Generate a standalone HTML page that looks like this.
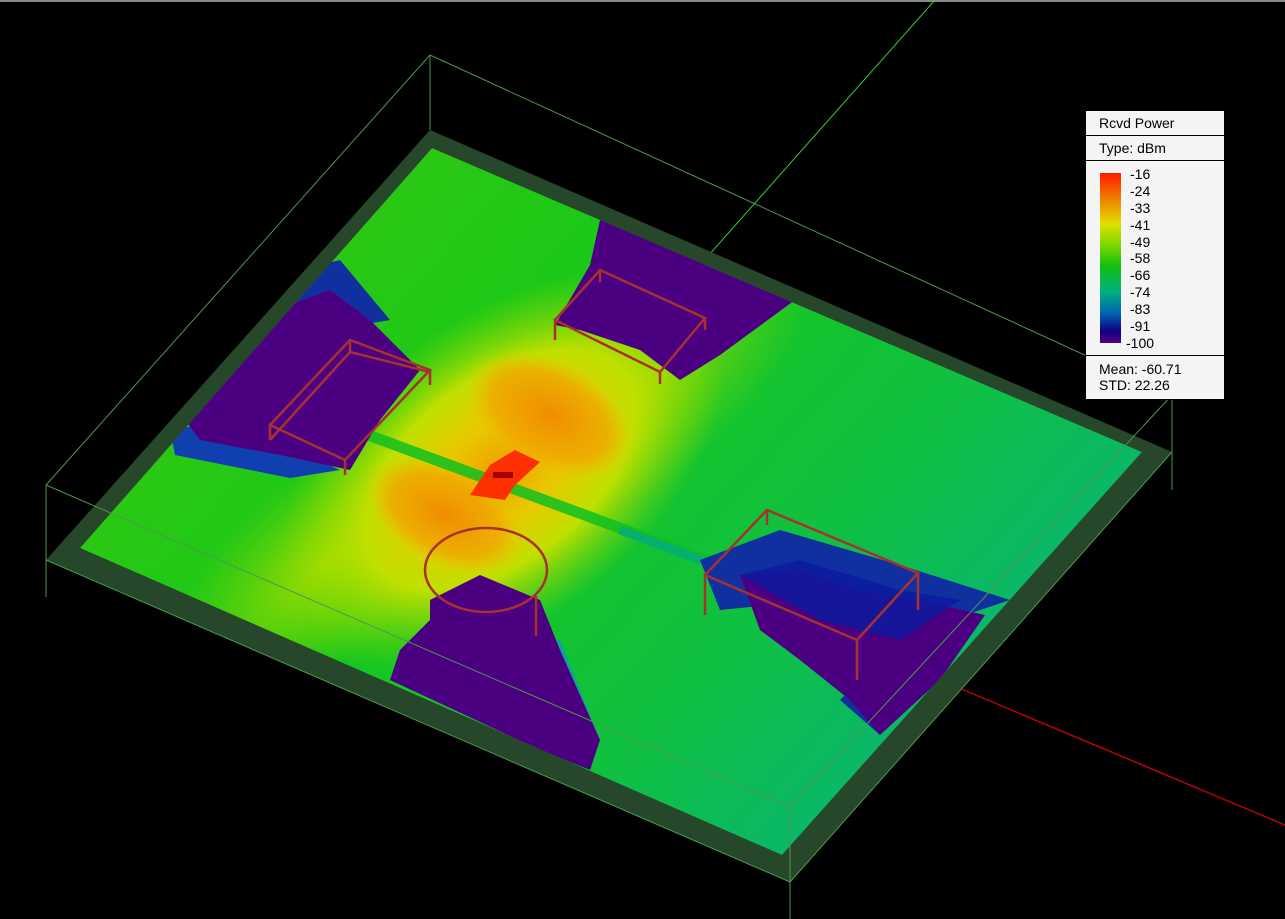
<!DOCTYPE html>
<html><head><meta charset="utf-8"><style>
html,body{margin:0;padding:0;background:#000;width:1285px;height:919px;overflow:hidden}
.leg{position:absolute;left:1085px;top:110px;width:138px;height:288px;background:#f4f4f4;border:1px solid #000;font-family:"Liberation Sans",sans-serif;font-size:14px;color:#000}
.leg .hr{position:absolute;left:0;right:0;height:1px;background:#000}
.leg .t{position:absolute;left:13px}
.bar{position:absolute;left:14px;top:62px;width:21px;height:170px;background:linear-gradient(#ff1a00,#f07800 14%,#e0e000 30%,#80d800 42%,#10c010 55%,#00b080 70%,#0060b0 83%,#100080 93%,#500080)}
.lb{position:absolute;left:44px;font-size:14px;line-height:14px}
</style></head><body>
<svg width="1285" height="919" style="position:absolute;left:0;top:0">
<defs>
<clipPath id="fl"><polygon points="80,548 432,148 1142,452 782,855"/></clipPath>
<linearGradient id="base" x1="0" y1="0" x2="1" y2="0.6"><stop offset="0" stop-color="#40c810"/><stop offset="0.45" stop-color="#18c818"/><stop offset="0.75" stop-color="#10c040"/><stop offset="1" stop-color="#08b478"/></linearGradient>
<radialGradient id="hot" cx="0.5" cy="0.5" r="0.5"><stop offset="0" stop-color="#f0a000"/><stop offset="0.3" stop-color="#e8c800"/><stop offset="0.6" stop-color="#c0e000"/><stop offset="1" stop-color="#80d800" stop-opacity="0"/></radialGradient>
<radialGradient id="or" cx="0.5" cy="0.5" r="0.5"><stop offset="0" stop-color="#f08c00"/><stop offset="0.7" stop-color="#f0a800" stop-opacity="0.8"/><stop offset="1" stop-color="#f0c000" stop-opacity="0"/></radialGradient>
<radialGradient id="yg" cx="0.5" cy="0.5" r="0.5"><stop offset="0" stop-color="#a8dc00"/><stop offset="1" stop-color="#80d800" stop-opacity="0"/></radialGradient>
</defs>
<rect x="0" y="0" width="1285" height="2" fill="#888"/>
<line x1="935" y1="0" x2="700" y2="265" stroke="#30d030" stroke-width="1"/>
<line x1="940" y1="680" x2="1285" y2="825" stroke="#e00000" stroke-width="1.2"/>
<!-- plate -->
<polygon points="46,560 430,130 1172,452 790,882" fill="#26472a"/>
<g clip-path="url(#fl)">
<polygon points="80,548 432,148 1142,452 782,855" fill="url(#base)"/>
<ellipse cx="330" cy="560" rx="200" ry="90" fill="url(#yg)" transform="rotate(-40 330 560)"/>
<ellipse cx="650" cy="380" rx="200" ry="90" fill="url(#yg)" transform="rotate(-40 650 380)" opacity="0.8"/>
<ellipse cx="500" cy="470" rx="260" ry="150" fill="url(#hot)" transform="rotate(-38 500 470)"/>
<ellipse cx="550" cy="415" rx="90" ry="55" fill="url(#or)" transform="rotate(28 550 415)"/>
<ellipse cx="445" cy="515" rx="85" ry="50" fill="url(#or)" transform="rotate(28 445 515)"/>
<line x1="360" y1="432" x2="720" y2="565" stroke="#10c020" stroke-width="11" opacity="0.85"/>
<line x1="620" y1="530" x2="720" y2="567" stroke="#00a890" stroke-width="9" opacity="0.7"/>
<polygon points="490,465 515,450 540,462 515,485 505,500 470,495" fill="#ff3000"/>
<rect x="493" y="472" width="20" height="6" fill="#a00000"/>
<!-- blue fringes -->
<polygon points="300,270 340,260 390,320 330,330 290,310" fill="#1030a0"/>
<polygon points="170,430 230,420 340,470 290,478 175,455" fill="#1040b0"/>
<polygon points="700,560 780,530 900,565 1010,600 950,620 820,600 720,610" fill="#1030a0"/>
<polygon points="510,650 560,640 600,740 560,745 500,720" fill="#10a0a0"/>
<polygon points="860,680 900,690 880,735 840,700" fill="#1030a0"/>
<!-- purple -->
<g fill="#4a0080">
<polygon points="600,220 750,270 795,300 720,355 680,380 640,350 580,330 555,325 590,265"/>
<polygon points="290,305 330,290 370,320 420,370 380,420 350,470 280,455 200,440 185,420"/>
<polygon points="430,600 480,575 540,600 560,650 600,740 590,770 540,750 390,680 400,650 430,620"/>
<polygon points="740,575 800,570 860,590 940,605 985,615 940,680 880,735 850,700 800,660 760,630"/>
</g>
<polygon points="740,575 800,560 900,590 960,600 900,640 820,620" fill="#0a1aa0" opacity="0.8"/>
</g>
<!-- red wireframes -->
<g stroke="#a83030" stroke-width="2.5" fill="none">
<polyline points="270,440 350,352 430,372 430,385"/>
<polyline points="350,340 350,352"/>
<polyline points="270,425 350,340 430,370 345,460 270,425 270,440"/>
<polyline points="345,460 345,475"/>
<polyline points="555,320 600,270 705,318 660,372 555,320 555,340"/>
<polyline points="705,318 705,330"/><polyline points="660,372 660,384"/><polyline points="600,270 600,282"/>
<polyline points="705,575 767,510 918,573 857,640 705,575 705,615"/>
<polyline points="767,510 767,525"/><polyline points="918,573 918,610"/><polyline points="857,640 857,680"/>
<ellipse cx="486" cy="570" rx="61" ry="42"/>
<line x1="536" y1="596" x2="536" y2="636"/>
</g>
<!-- green wireframe -->
<g stroke="#4a9a4a" stroke-width="1" fill="none">
<polyline points="46,485 430,55 1172,395"/>
<line x1="46" y1="485" x2="790" y2="807"/>
<line x1="790" y1="807" x2="1172" y2="395"/>
<line x1="46" y1="485" x2="46" y2="597"/>
<line x1="430" y1="55" x2="430" y2="130"/>
<line x1="1172" y1="395" x2="1172" y2="490"/>
<line x1="790" y1="807" x2="790" y2="919"/>
<line x1="46" y1="560" x2="790" y2="882"/>
<line x1="790" y1="882" x2="1172" y2="452"/>
</g>
</svg>
<div class="leg">
<div class="t" style="top:4px">Rcvd Power</div>
<div class="hr" style="top:24px"></div>
<div class="t" style="top:29px">Type: dBm</div>
<div class="hr" style="top:49px"></div>
<div class="bar"></div>
<div class="lb" style="top:56px">-16</div>
<div class="lb" style="top:73px">-24</div>
<div class="lb" style="top:90px">-33</div>
<div class="lb" style="top:107px">-41</div>
<div class="lb" style="top:124px">-49</div>
<div class="lb" style="top:140px">-58</div>
<div class="lb" style="top:157px">-66</div>
<div class="lb" style="top:174px">-74</div>
<div class="lb" style="top:191px">-83</div>
<div class="lb" style="top:208px">-91</div>
<div class="lb" style="top:225px;left:40px">-100</div>
<div class="hr" style="top:244px"></div>
<div class="t" style="top:250px">Mean: -60.71</div>
<div class="t" style="top:266px">STD: 22.26</div>
</div>
</body></html>
